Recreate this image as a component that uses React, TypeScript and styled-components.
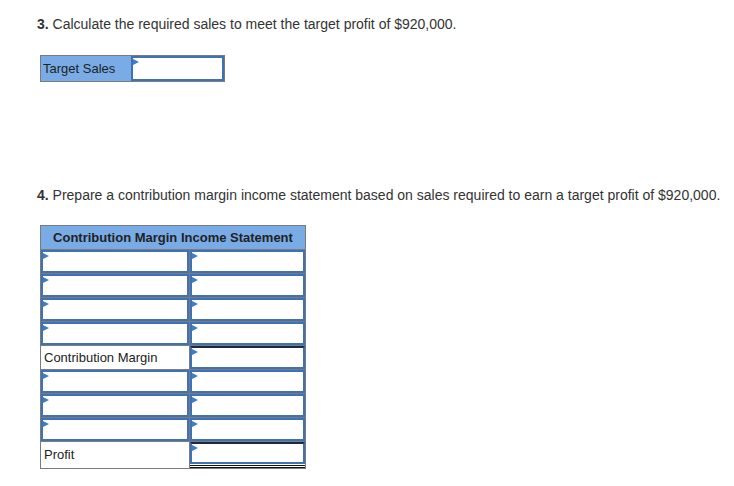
import { createGlobalStyle, styled } from "styled-components";

const GlobalStyle = createGlobalStyle`
  body {
    margin: 0;
    background: #ffffff;
    font-family: "Liberation Sans", Arial, sans-serif;
    color: #333333;
  }
`;

const rows: { label?: string; ruleTop?: boolean; total?: boolean }[] = [
  {},
  {},
  {},
  {},
  { label: "Contribution Margin", ruleTop: true },
  {},
  {},
  {},
  { label: "Profit", ruleTop: true, total: true },
];

function App() {
  return (
    <>
      <GlobalStyle />
      <Page>
        <Question>
          <b>3.</b> Calculate the required sales to meet the target profit of
          $920,000.
        </Question>
        <TargetTable>
          <HeadCell>Target Sales</HeadCell>
          <InputCell />
        </TargetTable>

        <Question $gap={104}>
          <b>4.</b> Prepare a contribution margin income statement based on
          sales required to earn a target profit of $920,000.
        </Question>
        <Statement>
          <Title>Contribution Margin Income Statement</Title>
          {rows.map((row, i) =>
            row.label ? (
              <Row key={i} $tall={row.total}>
                <LabelCell>{row.label}</LabelCell>
                {row.total ? (
                  <TotalCell>
                    <InputCell $ruleTop />
                  </TotalCell>
                ) : (
                  <InputCell $ruleTop={row.ruleTop} />
                )}
              </Row>
            ) : (
              <Row key={i}>
                <InputCell />
                <InputCell />
              </Row>
            )
          )}
        </Statement>
      </Page>
    </>
  );
}

export default App;

const Page = styled.div`
  padding: 15px 0 0 37px;
  font-size: 14px;
  line-height: 18px;
`;

const Question = styled.div<{ $gap?: number }>`
  margin-top: ${({ $gap }) => $gap ?? 0}px;
  color: #333333;

  b {
    font-weight: bold;
  }
`;

const TargetTable = styled.div`
  margin: 22px 0 0 3px;
  display: grid;
  grid-template-columns: 90px 93px;
  width: 183px;
  height: 25px;
  border: 1px solid #7b7b7b;
  background: #7b7b7b;
  font-size: 13px;
`;

const HeadCell = styled.div`
  background: #79abe6;
  color: #222222;
  padding-left: 2px;
  display: flex;
  align-items: center;
`;

const InputCell = styled.div<{ $ruleTop?: boolean }>`
  position: relative;
  background: #ffffff;
  border: 2px solid #3f72b5;
  ${({ $ruleTop }) => ($ruleTop ? "border-top: 2px solid #1a2a44;" : "")}

  &::before {
    content: "";
    position: absolute;
    top: 1px;
    left: 0;
    border-top: 3px solid transparent;
    border-bottom: 3px solid transparent;
    border-left: 6px solid #3f7cc6;
  }
`;

const TotalCell = styled.div`
  display: flex;
  flex-direction: column;
  background: #ffffff;
  padding-bottom: 1px;
  border-bottom: 3px double #111111;

  ${InputCell} {
    flex: 1;
  }
`;

const Statement = styled.div`
  margin: 21px 0 0 3px;
  width: 264px;
  border: 1px solid #7b7b7b;
  background: #7b7b7b;
  display: flex;
  flex-direction: column;
  gap: 1px;
  font-size: 13px;
`;

const Title = styled.div`
  height: 23px;
  background: #79abe6;
  color: #222222;
  font-weight: bold;
  display: flex;
  align-items: center;
  justify-content: center;
`;

const Row = styled.div<{ $tall?: boolean }>`
  display: grid;
  grid-template-columns: 148px 115px;
  gap: 1px;
  height: ${({ $tall }) => ($tall ? 26 : 23)}px;
`;

const LabelCell = styled.div`
  background: #ffffff;
  color: #222222;
  padding-left: 3px;
  display: flex;
  align-items: center;
`;
